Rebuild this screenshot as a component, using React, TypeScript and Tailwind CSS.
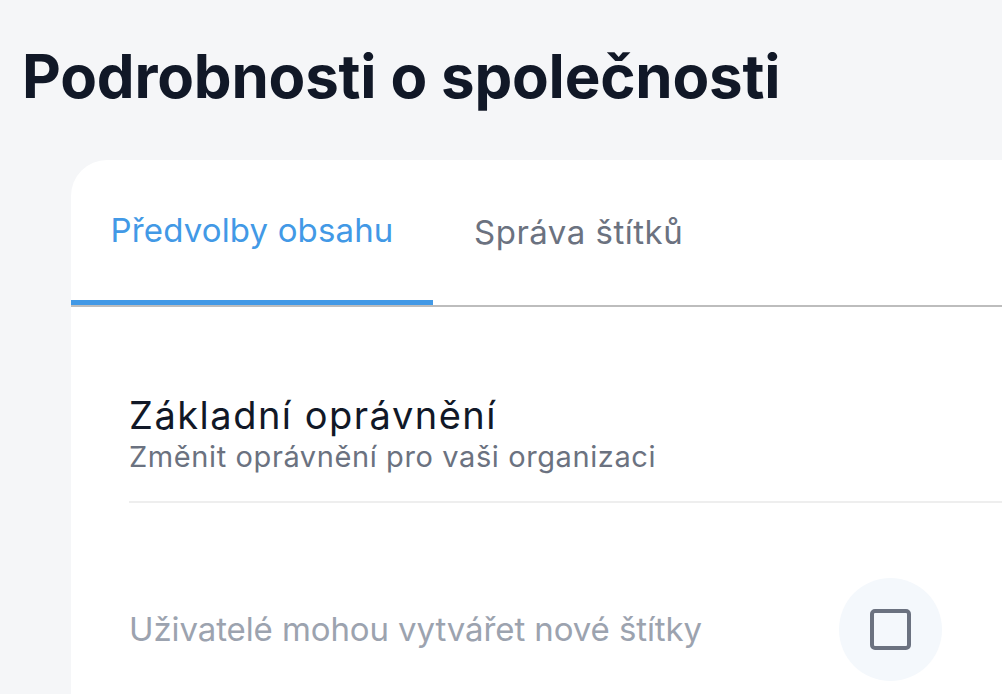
import React from "react";

export default function App() {
  return (
    <div className="w-[1002px] h-[694px] overflow-hidden bg-[#f5f6f8]" style={{ fontFamily: "Inter, 'Noto Sans', sans-serif" }}>
      <h1 className="pl-[22px] pt-[40px] h-[160px] text-[60px] leading-[72px] font-bold text-[#111827] tracking-[-0.2px]">
        Podrobnosti o společnosti
      </h1>
      <div className="ml-[71px] w-[1000px] h-[600px] bg-white rounded-tl-[36px]">
        <div className="flex border-b-2 border-[#bdbdbd]">
          <div className="w-[362px] h-[145px] flex items-center justify-center border-b-[5px] border-[#4299e6] -mb-[2px] pt-[1px] text-[33px] tracking-[0.15px] text-[#4299e6]">
            Předvolby obsahu
          </div>
          <div className="h-[145px] px-[41px] flex items-center pt-[1px] text-[33px] tracking-[0.5px] text-[#6b7280]">
            Správa štítků
          </div>
        </div>
        <div className="pl-[58px] pt-[86px]">
          <div className="border-b-2 border-[#eeeeee] pb-[24px]">
            <div className="text-[38px] leading-[44px] tracking-[1.5px] text-[#111827]">Základní oprávnění</div>
            <div className="text-[29px] leading-[40px] tracking-[0.6px] text-[#6b7280]">Změnit oprávnění pro vaši organizaci</div>
          </div>
          <div className="flex items-center h-[103px] mt-[75px]">
            <div className="w-[710px] text-[33px] tracking-[-0.1px] text-[#9ca3af]">Uživatelé mohou vytvářet nové štítky</div>
            <div className="w-[103px] h-[103px] rounded-full bg-[#f4f8fc] flex items-center justify-center">
              <div className="w-[41px] h-[41px] rounded-[5px] border-[4px] border-[#6b7280]" />
            </div>
          </div>
        </div>
      </div>
    </div>
  );
}
